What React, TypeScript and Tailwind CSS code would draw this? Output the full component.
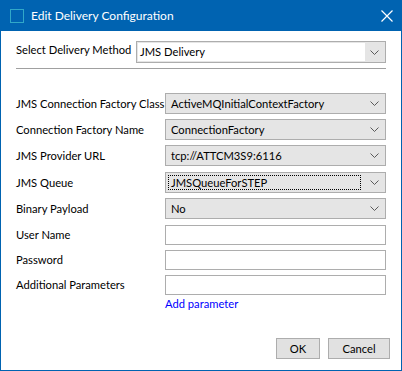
import React from "react";

const font = { fontFamily: 'Lato, "Noto Sans", sans-serif' };

function Chevron() {
  return (
    <svg width="9" height="5" viewBox="0 0 9 5" className="shrink-0">
      <polyline points="0.5,0.5 4.5,4.5 8.5,0.5" fill="none" stroke="#5a5a5a" strokeWidth="1" />
    </svg>
  );
}

function Combo({ value, focused }: { value: string; focused?: boolean }) {
  return (
    <div className="shrink-0 h-[21px] w-[221px] border border-[#adadad] bg-[#e5e5e5] flex items-center pl-[2px] pr-[6px]">
      <div className={"flex-1 h-[15px] flex items-center pl-[2px] " + (focused ? "border border-dotted border-black" : "border border-transparent")}>
        <span className="text-[11.2px] leading-none text-black whitespace-nowrap">{value}</span>
      </div>
      <div className="w-[18px] flex justify-end">
        <Chevron />
      </div>
    </div>
  );
}

function TextBox() {
  return <div className="shrink-0 h-[20px] w-[221px] border border-[#adadad] bg-white" />;
}

function Row({ label, children, mt }: { label: string; children: React.ReactNode; mt: string }) {
  return (
    <div className={"flex items-center " + mt}>
      <div className="shrink-0 w-[149px] text-[11.2px] text-black leading-none whitespace-nowrap">{label}</div>
      {children}
    </div>
  );
}

export default function App() {
  return (
    <div style={font} className="w-[402px] h-[371px] bg-white flex flex-col border-x border-b border-[#0063b1] overflow-hidden">
      <div className="h-[31px] bg-[#0063b1] flex items-center shrink-0 -mx-px">
        <div className="ml-[10px] w-[14px] h-[14px] border border-[#31a8c8]" />
        <div className="ml-[7px] text-[12px] text-white leading-none whitespace-nowrap">Edit Delivery Configuration</div>
        <div className="flex-1" />
        <svg width="12" height="12" viewBox="0 0 12 12" className="mr-[9px]">
          <path d="M0.5 0.5 L11.5 11.5 M11.5 0.5 L0.5 11.5" stroke="white" strokeWidth="1.2" />
        </svg>
      </div>
      <div className="flex-1 flex flex-col pl-[15px] pr-[14px]">
        <div className="flex mt-[10px]">
          <div className="shrink-0 w-[120px] text-[11.2px] text-black leading-none pt-[3px] whitespace-nowrap">Select Delivery Method</div>
          <div className="shrink-0 h-[22px] w-[250px] border border-[#adadad] bg-[#e5e5e5] flex items-stretch p-px">
            <div className="flex-1 bg-white flex items-center pl-[2px]">
              <span className="text-[11.2px] leading-none text-black">JMS Delivery</span>
            </div>
            <div className="w-[19px] flex items-center justify-center">
              <Chevron />
            </div>
          </div>
        </div>
        <div className="mt-[5px] h-px w-[370px] bg-[#a0a0a0]" />
        <Row label="JMS Connection Factory Class" mt="mt-[24px]">
          <Combo value="ActiveMQInitialContextFactory" />
        </Row>
        <Row label="Connection Factory Name" mt="mt-[5px]">
          <Combo value="ConnectionFactory" />
        </Row>
        <Row label="JMS Provider URL" mt="mt-[5px]">
          <Combo value="tcp://ATTCM3S9:6116" />
        </Row>
        <Row label="JMS Queue" mt="mt-[6px]">
          <Combo value="JMSQueueForSTEP" focused />
        </Row>
        <Row label="Binary Payload" mt="mt-[5px]">
          <Combo value="No" />
        </Row>
        <Row label="User Name" mt="mt-[6px]">
          <TextBox />
        </Row>
        <Row label="Password" mt="mt-[5px]">
          <TextBox />
        </Row>
        <Row label="Additional Parameters" mt="mt-[5px]">
          <TextBox />
        </Row>
        <div className="pl-[149px] h-[17px] flex items-center">
          <span className="text-[11.2px] leading-none text-[#0000ff]">Add parameter</span>
        </div>
        <div className="flex-1" />
        <div className="flex justify-end gap-[8px] mb-[11px] -mr-[3px]">
          <button className="h-[21px] w-[44px] border border-[#adadad] bg-[#e1e1e1] text-[11.2px] leading-none text-black">OK</button>
          <button className="h-[21px] w-[62px] border border-[#adadad] bg-[#e1e1e1] text-[11.2px] leading-none text-black">Cancel</button>
        </div>
      </div>
    </div>
  );
}
